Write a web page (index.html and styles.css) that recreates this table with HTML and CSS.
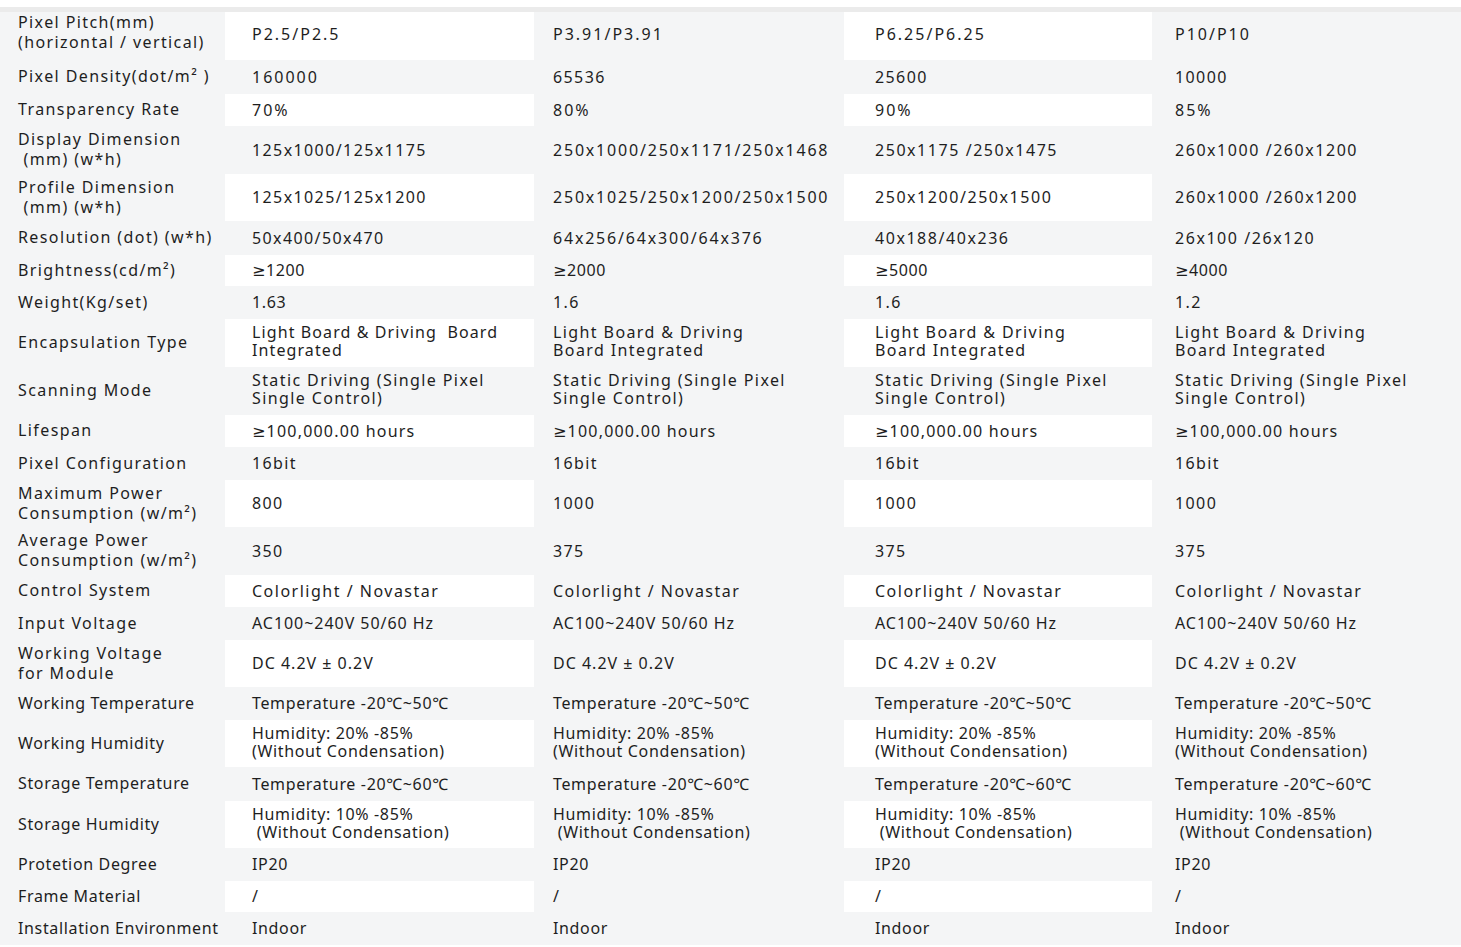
FILE: index.html
```html
<!DOCTYPE html>
<html lang="en">
<head>
<meta charset="utf-8">
<title>Specifications</title>
<link rel="stylesheet" href="styles.css">
</head>
<body>
<div class="page">
  <div class="rule"></div>
  <div class="spec">
    <div class="row odd first">
      <div class="cell lbl">Pixel Pitch(mm)<br>(horizontal / vertical)</div>
      <div class="cell c1 pv">P2.5/P2.5</div>
      <div class="cell c2 pv">P3.91/P3.91</div>
      <div class="cell c3 pv">P6.25/P6.25</div>
      <div class="cell c4 pv">P10/P10</div>
    </div>
    <div class="row">
      <div class="cell lbl">Pixel Density(dot/m² )</div>
      <div class="cell c1 pv">160000</div>
      <div class="cell c2">65536</div>
      <div class="cell c3">25600</div>
      <div class="cell c4">10000</div>
    </div>
    <div class="row odd">
      <div class="cell lbl">Transparency Rate</div>
      <div class="cell c1 pv">70%</div>
      <div class="cell c2 pv">80%</div>
      <div class="cell c3 pv">90%</div>
      <div class="cell c4 pv">85%</div>
    </div>
    <div class="row">
      <div class="cell lbl">Display Dimension<br>&nbsp;(mm) (w*h)</div>
      <div class="cell c1">125x1000/125x1175</div>
      <div class="cell c2 wide">250x1000/250x1171/250x1468</div>
      <div class="cell c3 mid">250x1175 /250x1475</div>
      <div class="cell c4 mid">260x1000 /260x1200</div>
    </div>
    <div class="row odd">
      <div class="cell lbl">Profile Dimension<br>&nbsp;(mm) (w*h)</div>
      <div class="cell c1">125x1025/125x1200</div>
      <div class="cell c2 wide">250x1025/250x1200/250x1500</div>
      <div class="cell c3 mid">250x1200/250x1500</div>
      <div class="cell c4 mid">260x1000 /260x1200</div>
    </div>
    <div class="row">
      <div class="cell lbl">Resolution (dot) (w*h)</div>
      <div class="cell c1">50x400/50x470</div>
      <div class="cell c2 wide">64x256/64x300/64x376</div>
      <div class="cell c3 mid">40x188/40x236</div>
      <div class="cell c4 mid">26x100 /26x120</div>
    </div>
    <div class="row odd">
      <div class="cell lbl">Brightness(cd/m²)</div>
      <div class="cell c1 ge">≥1200</div>
      <div class="cell c2 ge">≥2000</div>
      <div class="cell c3 ge">≥5000</div>
      <div class="cell c4 ge">≥4000</div>
    </div>
    <div class="row">
      <div class="cell lbl">Weight(Kg/set)</div>
      <div class="cell c1 ge">1.63</div>
      <div class="cell c2">1.6</div>
      <div class="cell c3">1.6</div>
      <div class="cell c4">1.2</div>
    </div>
    <div class="row odd">
      <div class="cell lbl">Encapsulation Type</div>
      <div class="cell c1 two lb">Light Board &amp; Driving&nbsp; Board<br>Integrated</div>
      <div class="cell c2 two">Light Board &amp; Driving<br>Board Integrated</div>
      <div class="cell c3 two">Light Board &amp; Driving<br>Board Integrated</div>
      <div class="cell c4 two">Light Board &amp; Driving<br>Board Integrated</div>
    </div>
    <div class="row">
      <div class="cell lbl">Scanning Mode</div>
      <div class="cell c1 two">Static Driving (Single Pixel<br>Single Control)</div>
      <div class="cell c2 two">Static Driving (Single Pixel<br>Single Control)</div>
      <div class="cell c3 two">Static Driving (Single Pixel<br>Single Control)</div>
      <div class="cell c4 two">Static Driving (Single Pixel<br>Single Control)</div>
    </div>
    <div class="row odd">
      <div class="cell lbl">Lifespan</div>
      <div class="cell c1 life">≥100,000.00 hours</div>
      <div class="cell c2 life">≥100,000.00 hours</div>
      <div class="cell c3 life">≥100,000.00 hours</div>
      <div class="cell c4 life">≥100,000.00 hours</div>
    </div>
    <div class="row">
      <div class="cell lbl">Pixel Configuration</div>
      <div class="cell c1">16bit</div>
      <div class="cell c2">16bit</div>
      <div class="cell c3">16bit</div>
      <div class="cell c4">16bit</div>
    </div>
    <div class="row odd">
      <div class="cell lbl">Maximum Power<br>Consumption (w/m²)</div>
      <div class="cell c1">800</div>
      <div class="cell c2">1000</div>
      <div class="cell c3">1000</div>
      <div class="cell c4">1000</div>
    </div>
    <div class="row">
      <div class="cell lbl">Average Power<br>Consumption (w/m²)</div>
      <div class="cell c1">350</div>
      <div class="cell c2">375</div>
      <div class="cell c3">375</div>
      <div class="cell c4">375</div>
    </div>
    <div class="row odd">
      <div class="cell lbl">Control System</div>
      <div class="cell c1 cs">Colorlight / Novastar</div>
      <div class="cell c2 cs">Colorlight / Novastar</div>
      <div class="cell c3 cs">Colorlight / Novastar</div>
      <div class="cell c4 cs">Colorlight / Novastar</div>
    </div>
    <div class="row">
      <div class="cell lbl">Input Voltage</div>
      <div class="cell c1 ac">AC100~240V 50/60 Hz</div>
      <div class="cell c2 ac">AC100~240V 50/60 Hz</div>
      <div class="cell c3 ac">AC100~240V 50/60 Hz</div>
      <div class="cell c4 ac">AC100~240V 50/60 Hz</div>
    </div>
    <div class="row odd">
      <div class="cell lbl">Working Voltage<br>for Module</div>
      <div class="cell c1 dc">DC 4.2V ± 0.2V</div>
      <div class="cell c2 dc">DC 4.2V ± 0.2V</div>
      <div class="cell c3 dc">DC 4.2V ± 0.2V</div>
      <div class="cell c4 dc">DC 4.2V ± 0.2V</div>
    </div>
    <div class="row tight">
      <div class="cell lbl">Working Temperature</div>
      <div class="cell c1">Temperature -20℃~50℃</div>
      <div class="cell c2">Temperature -20℃~50℃</div>
      <div class="cell c3">Temperature -20℃~50℃</div>
      <div class="cell c4">Temperature -20℃~50℃</div>
    </div>
    <div class="row odd tight">
      <div class="cell lbl">Working Humidity</div>
      <div class="cell c1 two">Humidity: 20% -85%<br>(Without Condensation)</div>
      <div class="cell c2 two">Humidity: 20% -85%<br>(Without Condensation)</div>
      <div class="cell c3 two">Humidity: 20% -85%<br>(Without Condensation)</div>
      <div class="cell c4 two">Humidity: 20% -85%<br>(Without Condensation)</div>
    </div>
    <div class="row tight">
      <div class="cell lbl">Storage Temperature</div>
      <div class="cell c1">Temperature -20℃~60℃</div>
      <div class="cell c2">Temperature -20℃~60℃</div>
      <div class="cell c3">Temperature -20℃~60℃</div>
      <div class="cell c4">Temperature -20℃~60℃</div>
    </div>
    <div class="row odd tight">
      <div class="cell lbl">Storage Humidity</div>
      <div class="cell c1 two">Humidity: 10% -85%<br>&nbsp;(Without Condensation)</div>
      <div class="cell c2 two">Humidity: 10% -85%<br>&nbsp;(Without Condensation)</div>
      <div class="cell c3 two">Humidity: 10% -85%<br>&nbsp;(Without Condensation)</div>
      <div class="cell c4 two">Humidity: 10% -85%<br>&nbsp;(Without Condensation)</div>
    </div>
    <div class="row tight">
      <div class="cell lbl">Protetion Degree</div>
      <div class="cell c1">IP20</div>
      <div class="cell c2">IP20</div>
      <div class="cell c3">IP20</div>
      <div class="cell c4">IP20</div>
    </div>
    <div class="row odd tight">
      <div class="cell lbl">Frame Material</div>
      <div class="cell c1">/</div>
      <div class="cell c2">/</div>
      <div class="cell c3">/</div>
      <div class="cell c4">/</div>
    </div>
    <div class="row tight">
      <div class="cell lbl">Installation Environment</div>
      <div class="cell c1">Indoor</div>
      <div class="cell c2">Indoor</div>
      <div class="cell c3">Indoor</div>
      <div class="cell c4">Indoor</div>
    </div>
  </div>
</div>
</body>
</html>
```
FILE: styles.css
```css
html, body {
  margin: 0;
  padding: 0;
  background: #ffffff;
}

.page {
  padding-top: 7px;
  font-family: "Noto Sans", "DejaVu Sans", sans-serif;
  font-size: 16px;
  color: #1e1e1e;
}

.rule {
  height: 5px;
  background: #ebebeb;
}

.spec {
  display: grid;
  grid-template-columns: 225px 309px 310px 308px 309px;
  grid-template-rows: 48px 34px 32px 48px 47px 34px 31px 33px 48px 48px 32px 33px 47px 48px 32px 33px 47px 33px 47px 34px 47px 33px 31px 33px;
  background: #f4f5f6;
}

.row {
  display: contents;
}

.cell {
  display: flex;
  align-items: center;
  letter-spacing: 1.4px;
  line-height: 19px;
  white-space: nowrap;
}

.lbl {
  padding-left: 18px;
  padding-bottom: 2px;
  line-height: 20px;
}

.c1 { padding-left: 27px; }
.c2 { padding-left: 19px; }
.c3 { padding-left: 31px; }
.c4 { padding-left: 23px; }

.first .lbl {
  padding-bottom: 8px;
}

.first .cell:not(.lbl) {
  padding-bottom: 4px;
}

.two {
  line-height: 18px;
  padding-bottom: 4px;
}

.pv { letter-spacing: 2px; }
.wide { letter-spacing: 1.8px; }
.mid { letter-spacing: 1.55px; }
.ge { letter-spacing: 0.6px; }
.life { letter-spacing: 1.2px; }
.lb { letter-spacing: 1.1px; }
.cs { letter-spacing: 1.5px; }
.ac { letter-spacing: 0.95px; }
.dc { letter-spacing: 1px; }

.row.tight .cell {
  letter-spacing: 0.65px;
}

.row.odd .c1,
.row.odd .c3 {
  background: #ffffff;
}
```
